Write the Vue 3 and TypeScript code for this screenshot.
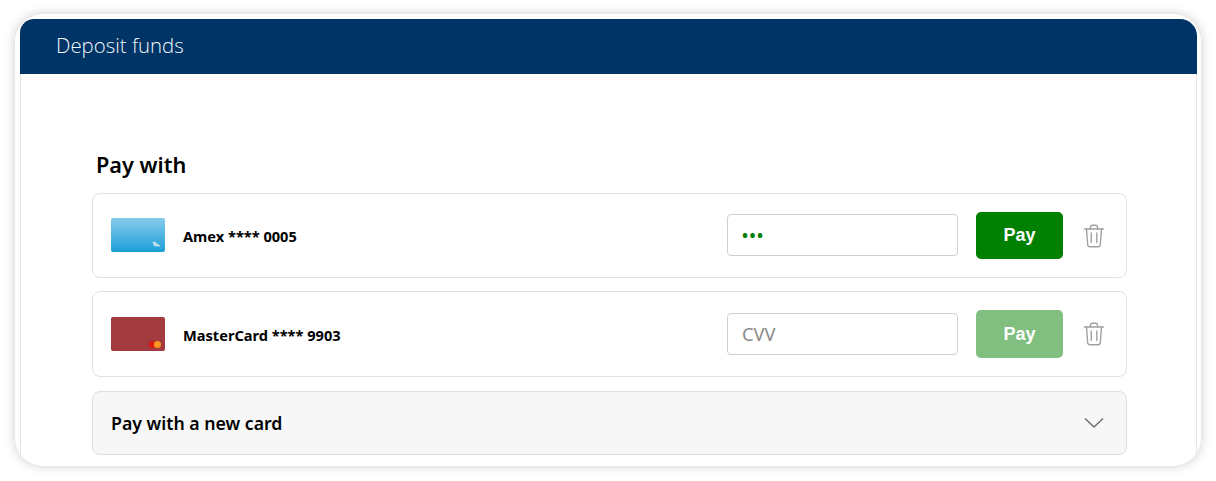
<script setup lang="ts">
interface Saved { id: string; label: string; kind: string; cvv: string; enabled: boolean }
const cards: Saved[] = [
  { id: 'amex', label: 'Amex **** 0005', kind: 'amex', cvv: '•••', enabled: true },
  { id: 'mc', label: 'MasterCard **** 9903', kind: 'mc', cvv: '', enabled: false },
]
</script>

<template>
  <div class="page">
    <div class="card">
      <div class="panel">
        <header class="head">Deposit funds</header>
        <main class="body">
          <h2 class="title">Pay with</h2>
          <div v-for="c in cards" :key="c.id" class="row" :class="'row-' + c.id">
            <div class="thumb" :class="'thumb-' + c.kind">
              <svg v-if="c.kind === 'amex'" class="mark" width="9" height="6" viewBox="0 0 9 6">
                <path d="M0.5 1 C2 0 4 1 5 2.5 L8.5 4.5 L8 5.5 L2 5.2 Z" fill="#b9dff1" />
              </svg>
              <span v-else class="mc"><i class="mc-r"></i><i class="mc-o"></i></span>
            </div>
            <span class="label">{{ c.label }}</span>
            <div class="cvv" :class="{ filled: c.cvv }">{{ c.cvv || 'CVV' }}</div>
            <button class="pay" :class="{ off: !c.enabled }" type="button">Pay</button>
            <svg class="trash" width="22" height="24" viewBox="0 0 22 24" fill="none" stroke="#a0a0a0" stroke-width="1.4" stroke-linecap="round" stroke-linejoin="round">
              <path d="M1.5 5H20.5" />
              <path d="M7.5 5V3.2C7.5 2 8.3 1.2 9.5 1.2H12.5C13.7 1.2 14.5 2 14.5 3.2V5" />
              <path d="M3.5 5L4.7 20.5C4.8 22 5.7 22.8 7 22.8H15C16.3 22.8 17.2 22 17.3 20.5L18.5 5" />
              <path d="M8.2 9V18.5M13.8 9V18.5" />
            </svg>
          </div>
          <div class="new">
            <span>Pay with a new card</span>
            <svg width="20" height="12" viewBox="0 0 20 12" fill="none" stroke="#6f6f6f" stroke-width="1.5">
              <path d="M1 1.5L10 10L19 1.5" />
            </svg>
          </div>
        </main>
      </div>
    </div>
  </div>
</template>

<style>
html, body { margin: 0; background: #fff; overflow: hidden; }
</style>

<style scoped>
.page {
  width: 1216px;
  height: 481px;
  box-sizing: border-box;
  padding: 14px 15px 15px;
  font-family: "Noto Sans", "Open Sans", sans-serif;
  color: #000;
}
.card {
  height: 452px;
  box-sizing: border-box;
  padding: 5px 4px 0 5px;
  background: #fff;
  border-radius: 28px;
  box-shadow: 0 0 12px rgba(0, 0, 0, 0.2);
  overflow: hidden;
}
.panel {
  height: 100%;
  box-sizing: border-box;
  border-radius: 14px 17px 0 0;
  overflow: hidden;
}
.head {
  height: 55px;
  box-sizing: border-box;
  padding: 13px 0 0 36px;
  background: #003366;
  color: #f0f9fc;
  font-family: "Open Sans", "Noto Sans", sans-serif;
  font-size: 20.4px;
  font-weight: 300;
  line-height: 26px;
}
.body {
  height: 392px;
  box-sizing: border-box;
  padding: 76px 69px 0 71px;
  border-left: 1px solid #e4e4e4;
  border-right: 1px solid #e4e4e4;
}
.title {
  margin: 0 0 14px 4px;
  font-size: 21.7px;
  line-height: 29px;
  font-weight: 600;
}
.row {
  display: flex;
  align-items: center;
  box-sizing: border-box;
  height: 85px;
  margin-bottom: 13px;
  padding: 0 21px 0 18px;
  border: 1px solid #e1e1e1;
  border-radius: 8px;
}
.row-mc { height: 86px; margin-bottom: 14px; }
.row-amex .thumb, .row-amex .cvv { margin-bottom: 2px; }
.thumb {
  position: relative;
  flex: none;
  width: 54px;
  height: 34px;
  border-radius: 2px;
}
.thumb-amex { background: linear-gradient(#87cbea, #1b9fd8); }
.thumb-mc { background: #a33a40; }
.mark { position: absolute; right: 4px; bottom: 5px; }
.mc { position: absolute; right: 4px; bottom: 3px; width: 12px; height: 7px; }
.mc-r, .mc-o { position: absolute; top: 0; width: 7px; height: 7px; border-radius: 50%; }
.mc-r { left: 0; background: #dc1a14; }
.mc-o { right: 0; background: #f7971d; }
.label {
  margin: 1px 0 0 18px;
  flex: 1;
  font-size: 14.6px;
  font-weight: 700;
}
.cvv {
  width: 231px;
  height: 42px;
  box-sizing: border-box;
  padding-left: 14px;
  border: 1px solid #cfcfcf;
  border-radius: 4px;
  font-size: 18.3px;
  line-height: 40px;
  color: #8b8b8b;
}
.cvv.filled {
  padding-left: 14px;
  color: #008000;
  font-size: 16px;
  font-weight: 700;
  letter-spacing: 1.5px;
}
.pay {
  width: 87px;
  height: 47px;
  margin: 0 20px 0 18px;
  padding: 0;
  border: 0;
  border-radius: 5px;
  background: #008000;
  color: #fff;
  font-family: "Liberation Sans", Arial, sans-serif;
  font-size: 18px;
  font-weight: 700;
}
.pay.off { height: 48px; background: #80bf80; }
.trash { flex: none; }
.new {
  display: flex;
  align-items: center;
  justify-content: space-between;
  box-sizing: border-box;
  height: 64px;
  padding: 0 22px 0 18px;
  border: 1px solid #dedede;
  border-radius: 8px;
  background: #f7f7f7;
  font-size: 17.7px;
  font-weight: 600;
}
</style>
